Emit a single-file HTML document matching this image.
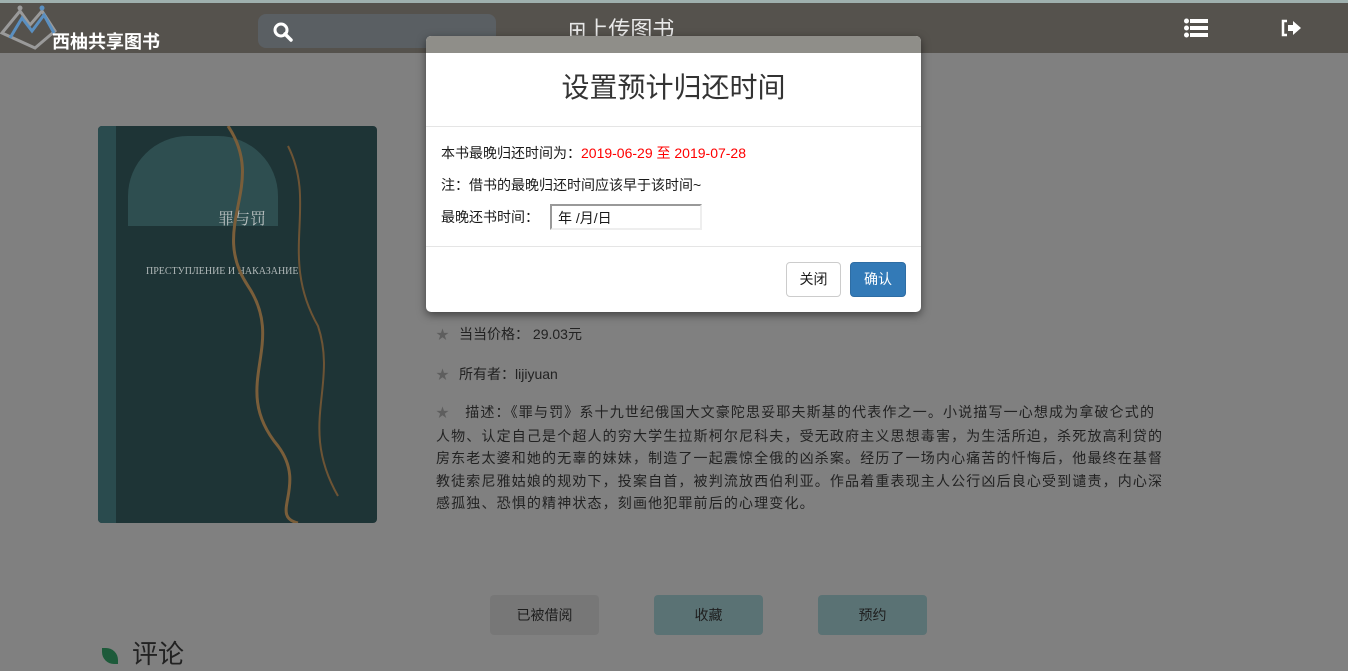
<!DOCTYPE html>
<html><head><meta charset="utf-8"><style>
*{box-sizing:border-box;margin:0;padding:0}
body{width:1348px;height:656px;overflow:hidden;background:#808080;font-family:"Liberation Sans","Noto Sans CJK SC",sans-serif;font-size:14px;color:#1a1a1a;position:relative}
.abs{position:absolute}
.nav{left:0;top:0;width:1348px;height:53px;background:#55524d;border-top:3px solid #9fb0ae;z-index:3}
.search{left:258px;top:11px;width:238px;height:34px;border-radius:8px;background:#5a5f63}
.info{font-size:14px;color:#222}
.star{color:#5e5e5e;font-size:13px;margin-right:10px}
.btn{height:40px;width:110px;border-radius:4px;text-align:center;line-height:40px;font-size:14px;color:#1e1e1e}
.modal{left:426px;top:36px;width:495px;height:276px;background:#fff;border-radius:5px;box-shadow:0 3px 9px rgba(0,0,0,.5);z-index:4;overflow:hidden}
</style></head><body>
<div class="abs nav">
  <svg class="abs" style="left:0;top:0" width="70" height="50" viewBox="0 0 70 50">
    <path d="M2 30 L20 8 L30 22 L42 8 L55 28 L35 45 Z" fill="none" stroke="#9a9a9a" stroke-width="3"/>
    <path d="M10 35 L22 15 L32 28 L44 12 L54 30" fill="none" stroke="#5a8fc0" stroke-width="3"/>
    <circle cx="20" cy="5" r="2.5" fill="#9a9a9a"/><circle cx="42" cy="5" r="2.5" fill="#5a8fc0"/>
  </svg>
  <div class="abs" style="left:52px;top:25px;color:#fff;font-size:18px;font-weight:bold">西柚共享图书</div>
  <div class="abs search">
    <svg class="abs" style="left:14px;top:7px" width="22" height="22" viewBox="0 0 22 22"><circle cx="9" cy="9" r="6" fill="none" stroke="#fff" stroke-width="3"/><path d="M13 13 L19 19" stroke="#fff" stroke-width="3.5" stroke-linecap="round"/></svg>
  </div>
  <div class="abs" style="left:568px;top:9px;color:#e8e8e8;font-size:22px">⊞上传图书</div>
  <svg class="abs" style="left:1184px;top:15px" width="24" height="20" viewBox="0 0 24 20"><g fill="#fff"><circle cx="2.5" cy="3" r="2.5"/><circle cx="2.5" cy="10" r="2.5"/><circle cx="2.5" cy="17" r="2.5"/><rect x="6" y="1" width="18" height="4"/><rect x="6" y="8" width="18" height="4"/><rect x="6" y="15" width="18" height="4"/></g></svg>
  <svg class="abs" style="left:1280px;top:16px" width="22" height="18" viewBox="0 0 22 18"><path d="M7 2 H3 V16 H7" fill="none" stroke="#fff" stroke-width="2.5"/><path d="M8 6 H13 V2 L21 9 L13 16 V12 H8 Z" fill="#fff"/></svg>
</div>

<div class="abs" style="left:98px;top:126px;width:279px;height:397px;border-radius:4px;background:#1e3436;overflow:hidden">
  <div class="abs" style="left:0;top:0;width:18px;height:397px;background:#2a4b4e"></div>
  <div class="abs" style="left:30px;top:10px;width:150px;height:90px;background:#2e4e50;border-radius:60px 60px 0 0"></div>
  <div class="abs" style="left:120px;top:80px;color:#b9c0c0;font-size:16px;font-family:'Noto Serif CJK SC',serif">罪与罚</div>
  <div class="abs" style="left:48px;top:140px;color:#b0b8b8;font-size:10px;font-family:'Liberation Serif',serif">ПРЕСТУПЛЕНИЕ И НАКАЗАНИЕ</div>
  <svg class="abs" style="left:90px;top:0" width="170" height="397"><path d="M40 0 C80 60 20 100 60 160 C100 220 40 260 90 320 C120 360 80 390 110 397" fill="none" stroke="#7a5e3a" stroke-width="3"/><path d="M100 20 C130 80 90 130 130 200 C150 260 110 300 150 370" fill="none" stroke="#6d5435" stroke-width="2"/></svg>
</div>

<div class="abs info" style="left:436px;top:324px"><span class="star">★</span>当当价格： 29.03元</div>
<div class="abs info" style="left:436px;top:364px"><span class="star">★</span>所有者：lijiyuan</div>
<div class="abs info" style="left:436px;top:401px;width:760px;line-height:22.5px;white-space:nowrap;letter-spacing:1.15px"><span class="star">★</span> 描述：《罪与罚》系十九世纪俄国大文豪陀思妥耶夫斯基的代表作之一。小说描写一心想成为拿破仑式的<br>人物、认定自己是个超人的穷大学生拉斯柯尔尼科夫，受无政府主义思想毒害，为生活所迫，杀死放高利贷的<br>房东老太婆和她的无辜的妹妹，制造了一起震惊全俄的凶杀案。经历了一场内心痛苦的忏悔后，他最终在基督<br>教徒索尼雅姑娘的规劝下，投案自首，被判流放西伯利亚。作品着重表现主人公行凶后良心受到谴责，内心深<br>感孤独、恐惧的精神状态，刻画他犯罪前后的心理变化。</div>

<div class="abs btn" style="left:490px;top:595px;background:#777;width:109px">已被借阅</div>
<div class="abs btn" style="left:654px;top:595px;background:#5a7274;width:109px">收藏</div>
<div class="abs btn" style="left:818px;top:595px;background:#5a7274;width:109px">预约</div>
<div class="abs" style="left:102px;top:648px;width:16px;height:16px;background:#1d5a3a;border-radius:0 12px 0 12px"></div>
<div class="abs" style="left:132px;top:634px;font-size:26px;color:#222">评论</div>

<div class="abs modal">
  <div class="abs" style="left:0;top:0;width:495px;height:17px;background:#8f8e89"></div>
  <div class="abs" style="left:0;top:30px;width:495px;text-align:center;font-size:28px;color:#333">设置预计归还时间</div>
  <div class="abs" style="left:0;top:90px;width:495px;border-top:1px solid #e5e5e5"></div>
  <div class="abs" style="left:15px;top:107px">本书最晚归还时间为：<span style="color:#f00">2019-06-29 至 2019-07-28</span></div>
  <div class="abs" style="left:15px;top:139px">注：借书的最晚归还时间应该早于该时间~</div>
  <div class="abs" style="left:15px;top:171px">最晚还书时间：</div>
  <div class="abs" style="left:124px;top:168px;width:152px;height:26px;border:2px solid #999;border-right-color:#eee;border-bottom-color:#eee;padding:2px 6px">年 /月/日</div>
  <div class="abs" style="left:0;top:210px;width:495px;border-top:1px solid #e5e5e5"></div>
  <div class="abs" style="left:360px;top:226px;width:55px;height:35px;border:1px solid #ccc;border-radius:4px;text-align:center;line-height:33px">关闭</div>
  <div class="abs" style="left:424px;top:226px;width:56px;height:35px;background:#337ab7;border:1px solid #2e6da4;border-radius:4px;text-align:center;line-height:33px;color:#fff">确认</div>
</div>
</body></html>
